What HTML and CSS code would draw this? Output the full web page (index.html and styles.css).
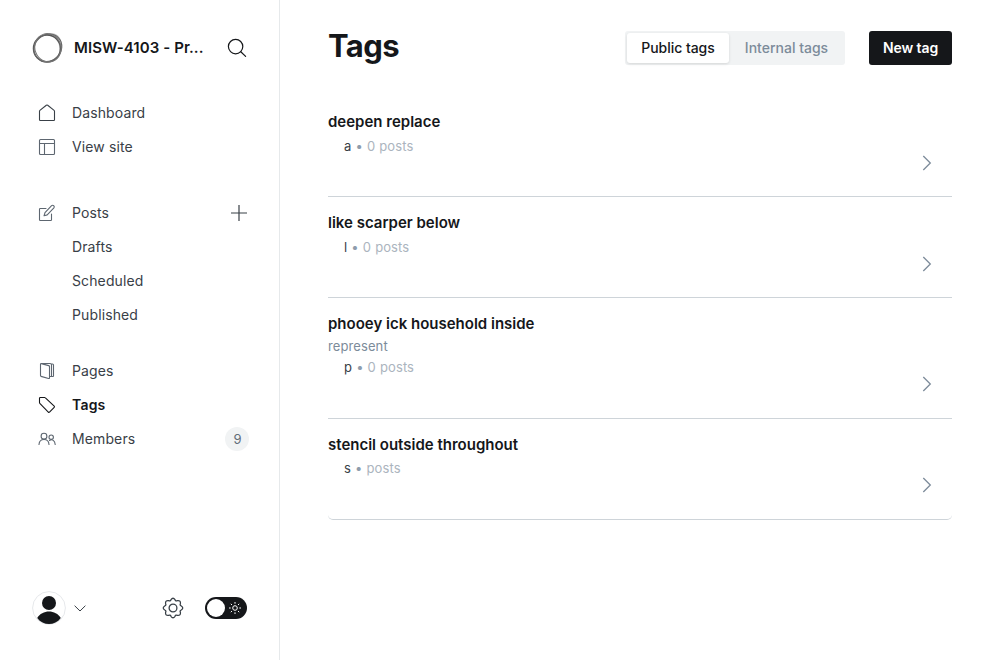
FILE: index.html
```html
<!DOCTYPE html>
<html lang="en">
<head>
<meta charset="utf-8">
<title>Tags</title>
<link rel="stylesheet" href="styles.css">
</head>
<body>
<div class="app">
  <aside class="sidebar">
    <header class="site">
      <svg class="logo" width="32" height="32" viewBox="0 0 32 32" fill="none">
        <path d="M12 3C17-.500 25 .500 28 6c3 6 2.500 13-2 18C29 16 27 7 19 4Z" fill="#ccc"/>
        <circle cx="15" cy="16.500" r="13.500" stroke="#555" stroke-width="1.500"/>
        <ellipse cx="16" cy="15.800" rx="14.600" ry="13" transform="rotate(-42 16 16)" stroke="#666" stroke-width="1.200"/>
        <ellipse cx="16" cy="15.800" rx="13" ry="14.300" transform="rotate(-20 16 16)" stroke="#777" stroke-width="1"/>
      </svg>
      <span class="site-name">MISW-4103 - Pr...</span>
      <svg class="search" width="20" height="20" viewBox="0 0 20 20" fill="none" stroke="#15171a" stroke-width="1.200" stroke-linecap="round"><circle cx="8.600" cy="8.600" r="7.200"/><path d="M13.800 13.800 18.600 18.400"/></svg>
    </header>
    <nav class="nav">
      <ul class="group group-main">
        <li class="link"><svg class="icon dark" viewBox="0 0 18 18"><path d="M1.500 7.200v8.600q0 .700.700.700h13.600q.700 0 .700-.700V7.200q0-.500-.400-.800L9.700 1.200q-.700-.500-1.400 0L1.900 6.400q-.400.300-.400.800Z"/></svg><span class="label">Dashboard</span></li>
        <li class="link"><svg class="icon" viewBox="0 0 18 18"><rect x="1.500" y="1.500" width="15" height="15" rx="1"/><path d="M1.500 5.500h15M6.500 5.500v11"/></svg><span class="label">View site</span></li>
      </ul>
      <ul class="group group-posts">
        <li class="link"><svg class="icon" viewBox="0 0 18 18"><path d="M8 4.500H2.200q-.700 0-.700.700v10.600q0 .700.700.700h10.600q.700 0 .700-.700V10M7 8.700l6.600-7q1-.9 2.100 0 1.100 1.100.2 2.200L9.200 10.900l-3.200.900Z"/></svg><span class="label">Posts</span><svg class="plus" viewBox="0 0 18 18"><path d="M9 1v16M1 9h16"/></svg></li>
        <li class="link sub"><span class="label">Drafts</span></li>
        <li class="link sub"><span class="label">Scheduled</span></li>
        <li class="link sub"><span class="label">Published</span></li>
      </ul>
      <ul class="group">
        <li class="link"><svg class="icon" viewBox="0 0 18 18"><path d="M3.300 1.500H12q1.500 0 1.500 1.500v11.500h-2M2.500 2.200v11.400q0 .600.600.800l7.400 2.100q1 .2 1-.7V4.500q0-.7-.8-.9L3.300 1.600q-.8-.2-.8.6ZM13.500 2h1q1 0 1 1v11q0 .500-.5.500h-1.500"/></svg><span class="label">Pages</span></li>
        <li class="link active"><svg class="icon" viewBox="0 0 18 18"><path d="M1.500 2.300v4.300q0 .4.300.7l8.500 8.800q.600.600 1.200 0l4.700-4.700q.600-.600 0-1.200L7.400 1.800Q7.100 1.500 6.700 1.500H2.300q-.800 0-.800.800Z"/></svg><span class="label">Tags</span></li>
        <li class="link"><svg class="icon" viewBox="0 0 18 18"><circle cx="6" cy="6.200" r="2.900"/><circle cx="13.200" cy="7.200" r="2.200"/><path d="M1 14.500c.2-3 2-5 5-5s4.800 2 5 5M11.500 10.500c2.800-1.800 5.400.2 5.700 4"/></svg><span class="label">Members</span><span class="count">9</span></li>
      </ul>
    </nav>
    <footer class="footer">
      <svg class="avatar" width="34" height="34" viewBox="0 0 34 34"><circle cx="17" cy="17" r="16.400" fill="#fff" stroke="#e6e8eb" stroke-width="1"/><circle cx="17" cy="12" r="7" fill="#15171a"/><path d="M5.200 27c5-8.700 18.600-8.700 23.600 0-5.800 8-17.800 8-23.600 0Z" fill="#15171a"/></svg>
      <svg class="caret" width="12" height="7" viewBox="0 0 12 7"><path d="M.6.700 6 6 11.400.7"/></svg>
      <svg class="gear" width="22" height="22" viewBox="0 0 22 22"><circle cx="11" cy="11" r="3.900"/><path d="M9 2.700Q11 -.2 13 2.700Q13.700 4.500 15.300 3.600Q18.900 3.100 18.400 6.700Q17.500 8.300 19.300 9Q22.200 11 19.300 13Q17.500 13.700 18.400 15.300Q18.900 18.900 15.300 18.400Q13.700 17.500 13 19.300Q11 22.200 9 19.300Q8.300 17.500 6.700 18.400Q3.100 18.900 3.600 15.300Q4.500 13.700 2.700 13Q-.2 11 2.700 9Q4.500 8.300 3.600 6.700Q3.100 3.100 6.700 3.600Q8.300 4.500 9 2.700Z"/></svg>
      <span class="toggle"><span class="knob"></span><svg width="12" height="12" viewBox="0 0 12 12"><circle cx="6" cy="6" r="2.300"/><path d="M6 0v1.700M6 10.300V12M0 6h1.700M10.300 6H12M1.800 1.800 3 3M9 9l1.200 1.200M1.800 10.200 3 9M9 3l1.200-1.200"/></svg></span>
    </footer>
  </aside>
  <main class="main">
    <header class="top">
      <h1 class="title">Tags</h1>
      <div class="tabs"><button class="tab selected">Public tags</button><button class="tab">Internal tags</button></div>
      <button class="new">New tag</button>
    </header>
    <ul class="list">
      <li class="row"><div><h3 class="name">deepen replace</h3><p class="meta"><span class="slug">a</span> <span class="dot">•</span> 0 posts</p></div><svg class="chevron" viewBox="0 0 10 16"><path d="m1.300 1 7 7-7 7"/></svg></li>
      <li class="row"><div><h3 class="name">like scarper below</h3><p class="meta"><span class="slug">l</span> <span class="dot">•</span> 0 posts</p></div><svg class="chevron" viewBox="0 0 10 16"><path d="m1.300 1 7 7-7 7"/></svg></li>
      <li class="row described"><div><h3 class="name">phooey ick household inside</h3><p class="desc">represent</p><p class="meta"><span class="slug">p</span> <span class="dot">•</span> 0 posts</p></div><svg class="chevron" viewBox="0 0 10 16"><path d="m1.300 1 7 7-7 7"/></svg></li>
      <li class="row"><div><h3 class="name">stencil outside throughout</h3><p class="meta"><span class="slug">s</span> <span class="dot">•</span> posts</p></div><svg class="chevron" viewBox="0 0 10 16"><path d="m1.300 1 7 7-7 7"/></svg></li>
    </ul>
  </main>
</div>
</body>
</html>
```
FILE: styles.css
```css
* { box-sizing: border-box; margin: 0; padding: 0; }
body { font-family: Inter, sans-serif; color: #15171a; background: #fff; }
ul { list-style: none; }
button { border: 0; font: inherit; }
svg { display: block; flex: none; fill: none; }
.app { display: flex; height: 660px; overflow: hidden; }
.sidebar { display: flex; flex-direction: column; width: 280px; border-right: 1px solid #e6e9eb; }
.site { display: flex; align-items: center; height: 32px; margin: 32px 32px 0; }
.site-name { margin-left: 10px; padding-bottom: 2px; font-size: 15px; font-weight: 600; letter-spacing: .08px; white-space: nowrap; }
.search { margin-left: auto; }
.nav { flex: 1; padding-top: 32px; }
.group { margin-bottom: 22px; }
.group-main { margin-bottom: 32px; }
.link { display: flex; align-items: center; height: 34px; padding: 0 30px 0 38px; font-size: 14px; letter-spacing: .12px; color: #394047; }
.label { padding-bottom: 1px; }
.icon { width: 18px; height: 18px; margin-right: 16px; stroke: #5d6670; stroke-width: 1.100; stroke-linejoin: round; stroke-linecap: round; }
.dark { stroke: #394047; }
.active { font-weight: 600; letter-spacing: .2px; color: #15171a; }
.active .icon { stroke: #15171a; }
.sub { padding-left: 72px; }
.plus { width: 18px; height: 18px; margin: 0 1px 0 auto; stroke: #394047; stroke-width: 1.200; }
.count { display: flex; align-items: center; justify-content: center; width: 24px; height: 24px; margin: 0 0 0 auto; padding: 0 0 1px 1px; border-radius: 50%; background: #f1f3f4; font-size: 13px; color: #626d79; }
.footer { display: flex; align-items: center; height: 34px; margin: 0 32px 35px; }
.caret { margin-left: 8px; stroke: #394047; }
.gear { margin-left: auto; stroke: #394047; stroke-width: 1.300; }
.toggle { display: flex; align-items: center; justify-content: space-between; width: 42px; height: 22px; margin-left: 21px; padding: 0 6px 0 2px; border-radius: 11px; background: #15171a; stroke: #fff; }
.knob { width: 18px; height: 18px; border-radius: 50%; background: #fff; }
.main { flex: 1; padding: 0 48px; }
.top { display: flex; align-items: center; height: 96px; }
.title { flex: 1; padding-bottom: 4px; font-size: 31px; font-weight: 700; line-height: 38px; letter-spacing: -.6px; }
.tabs { display: flex; height: 34px; padding: 2px; border-radius: 3px; background: #f1f3f4; }
.tab { width: 114px; padding: 0 0 1px 1px; border-radius: 3px; background: transparent; font-size: 14px; font-weight: 500; color: #7c8b9a; }
.selected { width: 102px; padding-left: 0; background: #fff; color: #15171a; font-weight: 450; letter-spacing: -.05px; box-shadow: 0 1px 3px rgba(0,0,0,.12); }
.new { width: 83px; height: 34px; margin-left: 24px; padding-bottom: 1px; border-radius: 3px; background: #15171a; color: #fff; font-size: 14px; font-weight: 600; letter-spacing: -.1px; }
.row { display: flex; justify-content: space-between; align-items: flex-end; min-height: 101px; padding: 15px 20px 0 0; border-bottom: 1px solid #ced4d9; }
.row > div { align-self: stretch; padding-bottom: 38px; }
.row:last-child { border-radius: 0 0 5px 5px; }
.name { font-size: 15px; font-weight: 600; line-height: 22px; }
.desc { padding-top: 1px; margin-bottom: -2px; font-size: 13px; line-height: 21px; letter-spacing: .1px; color: #7c8b9a; }
.meta { padding: 3px 0 1px 16px; font-size: 13px; line-height: 21px; letter-spacing: .1px; word-spacing: .3px; color: #abb4be; }
.desc + .meta { padding-top: 2px; }
.slug { color: #394047; }
.dot { color: #8e9cac; }
.chevron { width: 10px; height: 16px; margin-bottom: 25px; stroke: #7c8b9a; stroke-width: 1.300; }
.described { min-height: 121px; }
.described .chevron, .row:last-child .chevron { margin-bottom: 26px; }
.row:last-child .meta { padding-top: 2px; padding-bottom: 2px; }
```
